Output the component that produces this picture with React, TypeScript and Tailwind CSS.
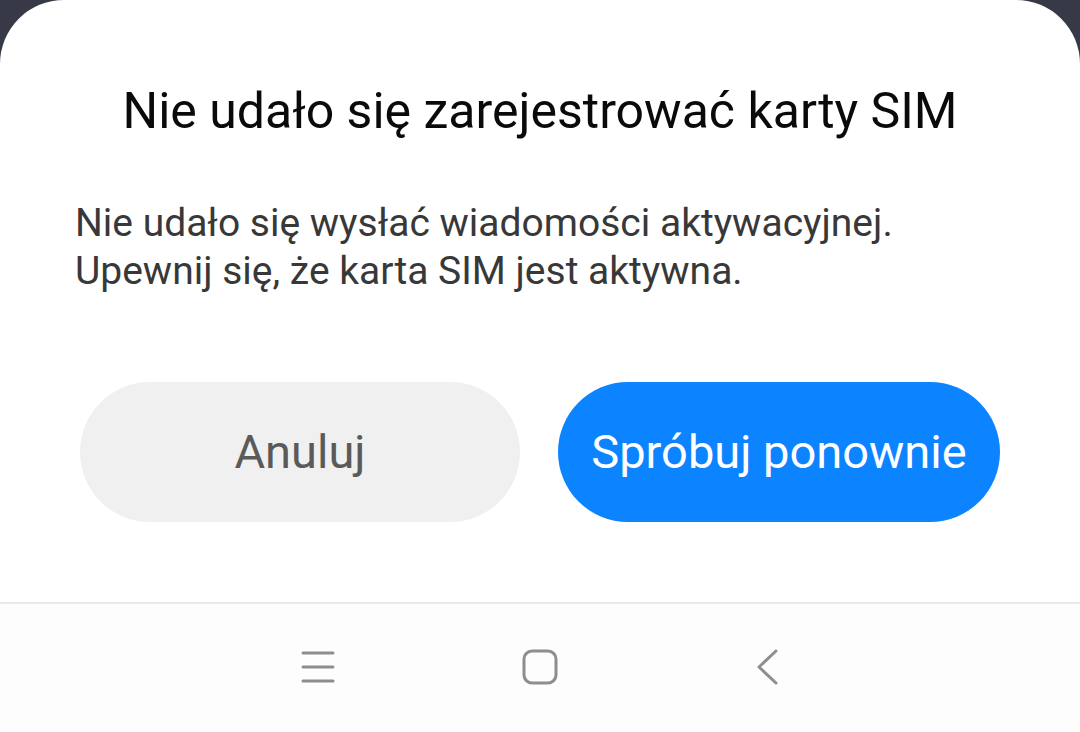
import React from 'react';

const NavMenuIcon = () => (
  <svg width="36" height="34" viewBox="0 0 36 34" fill="none" stroke="#8e8e8e" strokeWidth="3" strokeLinecap="round">
    <line x1="3" y1="3" x2="33" y2="3" />
    <line x1="3" y1="17" x2="33" y2="17" />
    <line x1="3" y1="31" x2="33" y2="31" />
  </svg>
);

const NavHomeIcon = () => (
  <svg width="36" height="36" viewBox="0 0 36 36" fill="none" stroke="#8e8e8e" strokeWidth="3">
    <rect x="2" y="2" width="32" height="32" rx="8" />
  </svg>
);

const NavBackIcon = () => (
  <svg width="24" height="38" viewBox="0 0 24 38" fill="none" stroke="#8e8e8e" strokeWidth="3" strokeLinecap="round" strokeLinejoin="round">
    <polyline points="20,3 3,19 20,35" />
  </svg>
);

export default function App() {
  return (
    <div
      className="w-[1080px] h-[732px] bg-[#383947] flex flex-col overflow-hidden"
      style={{ fontFamily: 'Roboto, "Noto Sans", sans-serif' }}
    >
      <div className="flex-1 bg-white rounded-t-[64px] flex flex-col">
        {/* dialog content */}
        <h1 className="pt-[82px] text-center text-[50px] leading-[58px] text-[#0a0a0a] font-normal whitespace-nowrap">
          Nie udało się zarejestrować karty SIM
        </h1>

        <p className="mt-[59px] px-[75px] text-[39px] leading-[48px] text-[#383838] whitespace-nowrap">
          Nie udało się wysłać wiadomości aktywacyjnej.
          <br />
          Upewnij się, że karta SIM jest aktywna.
        </p>

        <div className="mt-[87px] px-[80px] flex gap-[38px]">
          <button className="w-[440px] h-[140px] rounded-full bg-[#f0f0f0] text-[47px] text-[#5a5a5a] flex items-center justify-center">
            Anuluj
          </button>
          <button className="w-[442px] h-[140px] rounded-full bg-[#0d84ff] text-[47px] text-white flex items-center justify-center">
            Spróbuj ponownie
          </button>
        </div>

        <div className="mt-[80px] flex-1 border-t-2 border-[#e8e8e8] bg-[#fdfdfd] flex items-center">
          <div className="w-full flex items-center pb-[2px]">
            <div className="w-[300px] ml-[300px] flex">
              <NavMenuIcon />
            </div>
            <div className="ml-[-78px] flex">
              <NavHomeIcon />
            </div>
            <div className="ml-[198px] flex">
              <NavBackIcon />
            </div>
          </div>
        </div>
      </div>
    </div>
  );
}
